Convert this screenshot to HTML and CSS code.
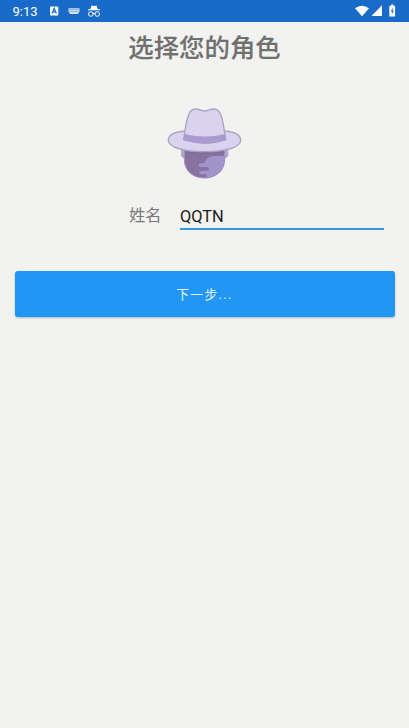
FILE: index.html
```html
<!DOCTYPE html>
<html lang="zh-CN">
<head>
<meta charset="utf-8">
<title>选择您的角色</title>
<link rel="stylesheet" href="styles.css">
</head>
<body>
<header class="status">
  <span class="clock">9:13</span>
  <svg class="notices" width="56" height="22" viewBox="0 0 56 22">
    <rect x="2" y="6.5" width="8.3" height="9" rx="1"/>
    <path class="cut" d="M4 13.5 6.2 8.3 8.4 13.5M4.8 11.8H7.6"/>
    <path d="M20.5 8.3H31.5V11.6L29.8 14H22.2L20.5 11.6Z" opacity=".8"/>
    <path class="keys" d="M21.5 9.6H31M21.5 11.4H31"/>
    <path d="M42.4 9.2 43.5 5.4 46 5.9 48.5 5.4 49.6 9.2H52V10.3H40V9.2Z"/>
    <path class="line" d="M44.8 13.6Q46 12.8 47.2 13.6"/>
    <circle class="line" cx="42.8" cy="14" r="2.3"/><circle class="line" cx="49.2" cy="14" r="2.3"/>
  </svg>
  <svg class="system" width="44" height="22" viewBox="0 0 44 22">
    <path d="M0 8.3Q7 3.2 14 8.3L7 16.3Z"/>
    <path d="M27 5.3V16H16.5Z"/>
    <path d="M35.1 5.8H36.2V4.5H38.4V5.8H39.5Q40.1 5.8 40.1 6.4V16.4H34.3V6.4Q34.3 5.8 35.1 5.8Z"/>
    <path class="bolt" d="M38 7.3 35.7 11.5H37.1L36.6 14.7 38.9 10.5H37.5Z"/>
  </svg>
</header>
<main class="page">
  <h1>选择您的角色</h1>
  <svg class="avatar" width="90" height="85" viewBox="0 0 270 255">
    <defs><clipPath id="face"><path d="M73 145H194V178C194 213 167 234 133 234S73 213 73 178Z"/></clipPath></defs>
    <path class="ear" d="M75 145H63V166Q64 174 75 175ZM193 145H205V166Q204 174 193 175Z"/>
    <g clip-path="url(#face)">
      <path class="skin" d="M70 140H200V240H70Z"/>
      <path class="shade" d="M70 140H200V156Q134 169 70 156Z"/>
      <path class="light" d="M200 168H161Q137 171 133 190H120Q116 191 116 195T121 201H142Q147 202 147 206T141 212H123Q117 213 118 218T124 223H138L145 238H200Z"/>
    </g>
    <path class="chin" d="M73 155V178C73 213 99 234 133 234S194 213 194 178V155"/>
    <path class="hat" d="M75 93C39 96 25 108 25 121C25 143 73 155 133 155S242 143 242 121C242 108 228 96 194 93Z"/>
    <path class="hat" d="M71 119C75 87 80 57 87 42C91 31 99 27 109 27C119 27 122 33 134 33S150 27 160 27C172 27 178 33 182 43C190 64 193 91 197 119Q137 139 71 119Z"/>
    <path class="band" d="M74 102Q135 117 195 102L199 119Q137 143 69 119Z"/>
  </svg>
  <div class="field">
    <label for="name">姓名</label>
    <input id="name" type="text" value="QQTN">
  </div>
  <button type="button">下一步...</button>
</main>
</body>
</html>
```
FILE: styles.css
```css
* { box-sizing: border-box; }
body {
  margin: 0;
  min-height: 728px;
  background: #f2f2f0;
  font-family: Roboto, "Noto Sans CJK SC", sans-serif;
}
.status {
  display: flex;
  height: 22px;
  padding: 0 12px 0 12.5px;
  background: #196bca;
}
.clock {
  width: 34.5px;
  color: #fff;
  font-size: 13px;
  font-weight: 400;
  line-height: 24px;
}
.status svg { fill: #fff; }
.notices { margin-left: 1px; }
.status .line { fill: none; stroke: #fff; stroke-width: 1; }
.status .cut { fill: none; stroke: #196bca; stroke-width: 1.2; }
.status .keys { fill: none; stroke: #196bca; stroke-width: .7; stroke-dasharray: 1 1; }
.status .bolt { fill: #196bca; }
.system { margin-left: auto; margin-right: -2px; }
.page {
  display: flex;
  flex-direction: column;
  align-items: center;
}
h1 {
  margin: 7px 0 0;
  height: 38px;
  color: #70706f;
  font-size: 25.4px;
  font-weight: 500;
  line-height: 38px;
  -webkit-text-stroke: .15px #70706f;
}
.avatar { margin-top: 33px; }
.skin { fill: #88729f; }
.shade { fill: #78658f; opacity: .45; }
.light { fill: #a094cb; }
.chin { fill: none; stroke: #a18dc0; stroke-width: 3; }
.ear { fill: #b3a8d0; }
.hat { fill: #d9d3ef; stroke: #ada3c1; stroke-width: 4; }
.band { fill: #a99bd0; }
.field {
  display: flex;
  align-self: stretch;
  height: 32px;
  margin: 13px 25px 0 129px;
}
label {
  width: 51px;
  color: #777;
  font-size: 16.3px;
  line-height: 36px;
}
input {
  flex: 1;
  min-width: 0;
  height: 32px;
  padding: 6px 0 0;
  border: 0;
  border-bottom: 2px solid #3498df;
  background: transparent;
  color: #202020;
  font: 16.4px Roboto, sans-serif;
  outline: 0;
}
button {
  width: 380px;
  height: 46px;
  margin-top: 41px;
  padding: 0;
  border: 0;
  border-radius: 3px;
  background: #2196f3;
  box-shadow: 0 1px 2px rgba(0, 60, 100, .3);
  color: #e9f6ff;
  font: 12.7px/47px Roboto, "Noto Sans CJK SC", sans-serif;
  letter-spacing: 1.4px;
}
```
